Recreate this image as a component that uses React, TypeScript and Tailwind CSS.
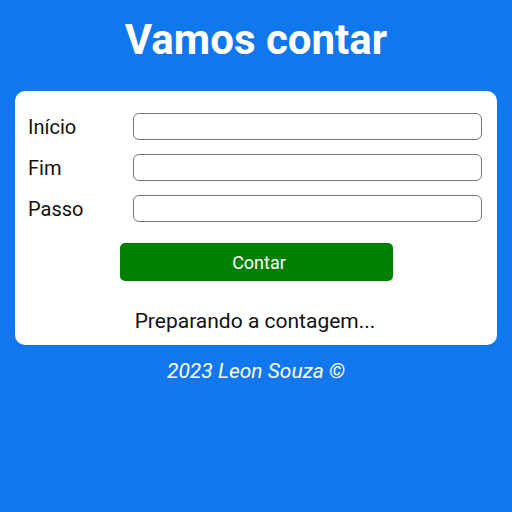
export default function App() {
  return (
    <div className="min-h-[512px] w-full bg-[#1077ec] font-['Roboto',sans-serif] px-[15px] pt-[14px]">
      <h1 className="text-center text-[42px] font-bold leading-[52px] text-white">Vamos contar</h1>
      <div className="mt-[25px] rounded-[10px] bg-white pl-[13px] pr-[15px] pt-[22px] pb-[9px]">
        {['Início', 'Fim', 'Passo'].map((label) => (
          <div key={label} className="mb-[14px] flex h-[27px] items-center">
            <label className="w-[105px] text-[20px] text-[#111]">{label}</label>
            <input className="h-[27px] flex-1 rounded-[6px] border border-[#767676] bg-white" />
          </div>
        ))}
        <div className="flex justify-center pt-[7px]">
          <button className="ml-[2px] h-[38px] w-[273px] rounded-[5px] bg-[#008000] pl-[6px] text-[18px] text-white">
            Contar
          </button>
        </div>
        <p className="mt-[25px] text-center text-[21px] leading-[30px] text-[#111]">Preparando a contagem...</p>
      </div>
      <p className="mt-[11px] text-center text-[21px] italic text-white">2023 Leon Souza ©</p>
    </div>
  );
}
